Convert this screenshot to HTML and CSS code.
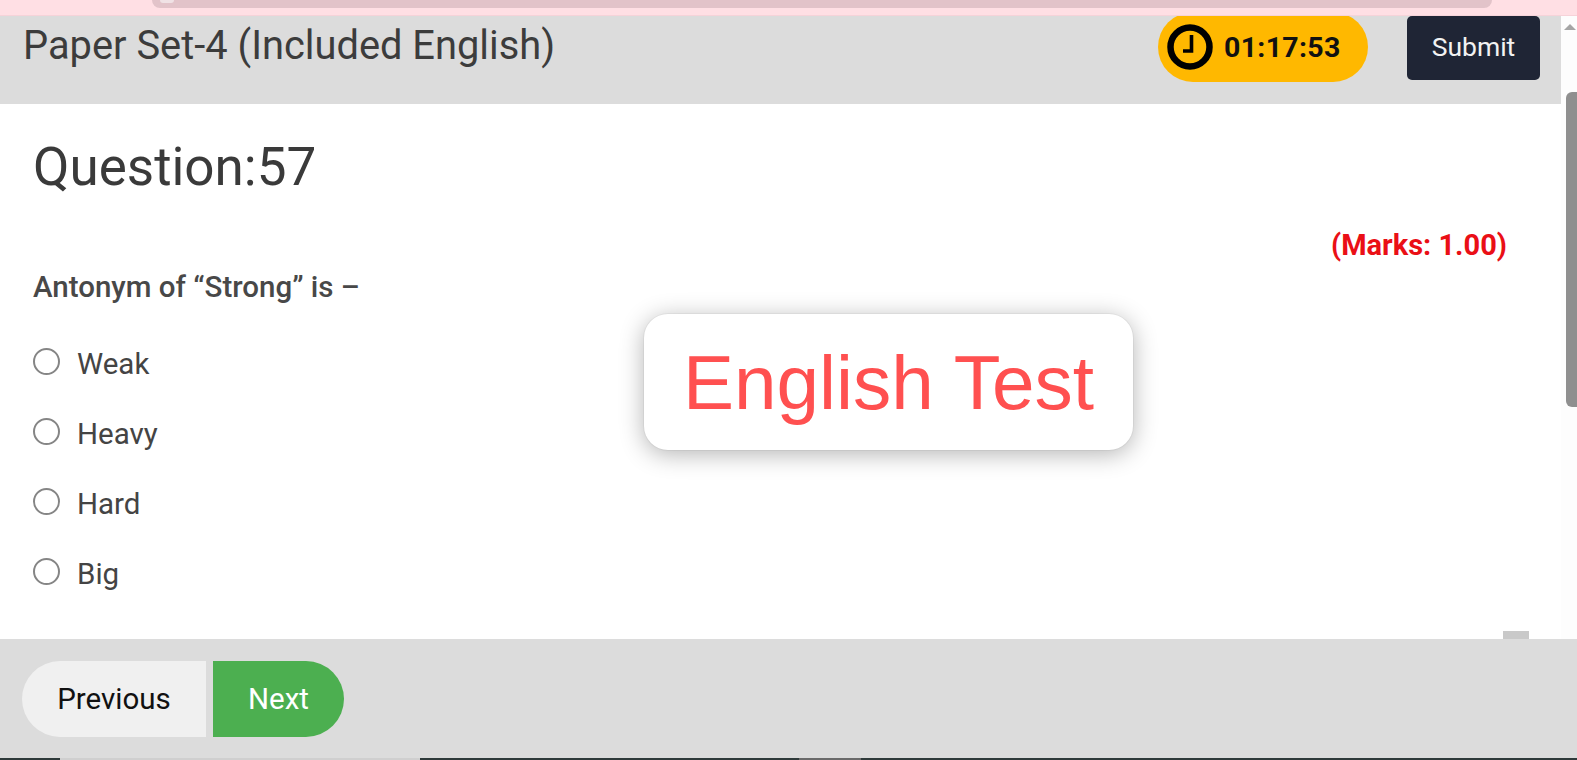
FILE: index.html
```html
<!DOCTYPE html>
<html lang="en">
<head>
<meta charset="utf-8">
<title>Paper Set-4 (Included English)</title>
<link rel="stylesheet" href="styles.css">
</head>
<body>
<div class="app">
  <div class="topstrip"><div class="urlbar"><span class="urldot"></span></div></div>
  <div class="middle">
    <div class="main">
      <header class="header">
        <h1 class="title">Paper Set-4 (Included English)</h1>
        <div class="timer">
          <svg class="clock" viewBox="0 0 46 46" aria-hidden="true">
            <circle cx="23" cy="23" r="19.5" fill="none" stroke="#000" stroke-width="6.5"/>
            <path d="M24.5 11V27H16" fill="none" stroke="#000" stroke-width="3.6"/>
          </svg>
          <span>01:17:53</span>
        </div>
        <button class="submit">Submit</button>
      </header>
      <section class="content">
        <h2 class="qnum">Question:57</h2>
        <div class="marks">(Marks: 1.00)</div>
        <p class="qtext">Antonym of “Strong” is –</p>
        <ul class="options">
          <li class="option"><span class="radio"></span>Weak</li>
          <li class="option"><span class="radio"></span>Heavy</li>
          <li class="option"><span class="radio"></span>Hard</li>
          <li class="option"><span class="radio"></span>Big</li>
        </ul>
        <div class="chip"></div>
      </section>
    </div>
    <div class="scrollbar">
      <div class="arrow"></div>
      <div class="thumb"></div>
    </div>
  </div>
  <footer class="footer">
    <button class="nav prev">Previous</button>
    <button class="nav next">Next</button>
  </footer>
  <div class="bottomstrip">
    <span class="seg dark s1"></span><span class="seg light s2"></span><span class="seg dark s3"></span><span class="seg grey s4"></span><span class="seg dark s5"></span>
  </div>
  <div class="toast">English Test</div>
</div>
</body>
</html>
```
FILE: styles.css
```css
* { box-sizing: border-box; }
html, body { margin: 0; padding: 0; height: 100%; overflow: hidden; }
body { font-family: Roboto, "Liberation Sans", sans-serif; background: #fff; color: #3a3a3a; }

.app { position: relative; width: 1577px; height: 760px; display: flex; flex-direction: column; }

.topstrip { position: relative; z-index: 1; height: 16px; flex: none; background: #ffdfe4; border-bottom: 1px solid #f6d3d9; padding: 0 85px 0 152px; }
.urlbar { height: 8px; background: #e2c3c9; border-radius: 0 0 12px 12px; padding-left: 8px; overflow: hidden; }
.urldot { display: block; width: 14px; height: 3px; background: #f0e2e5; border-radius: 0 0 7px 7px; }

.middle { flex: 1; display: flex; min-height: 0; }
.main { flex: 1; display: flex; flex-direction: column; min-width: 0; }

.header { height: 88px; flex: none; background: #dcdcdc; display: flex; align-items: flex-start; padding-left: 23px; padding-right: 21px; }
.title { flex: 1; margin: 5px 0 0; font-size: 39.85px; line-height: 50px; font-weight: 400; color: #3c3c3c; }
.timer { width: 210px; height: 70px; margin: -4px 39px 0 0; background: #ffb800; border-radius: 35px; display: flex; align-items: center; gap: 11px; padding-left: 9px; font-size: 28.5px; font-weight: 700; color: #111; letter-spacing: 0.3px; }
.clock { width: 46px; height: 46px; flex: none; }
.submit { width: 133px; height: 64px; border: 0; border-radius: 5px; background: #1f2535; color: #f2f2f2; font: 400 26.5px Roboto, sans-serif; padding: 0 0 4px; }

.content { position: relative; flex: 1; background: #fff; padding: 0 34px; }
.qnum { margin: 33px 0 0 -1px; font-size: 53px; line-height: 60px; font-weight: 400; color: #3a3a3a; }
.marks { margin: 30px 20px 0 0; text-align: right; font-size: 29px; line-height: 36px; font-weight: 700; color: #ea0f16; }
.qtext { margin: 6px 0 0 -1px; font-size: 29.5px; line-height: 36px; font-weight: 500; color: #484848; }
.options { list-style: none; margin: 41px 0 0; padding: 0; display: flex; flex-direction: column; gap: 34px; }
.option { display: flex; align-items: center; gap: 17px; height: 36px; font-size: 29.5px; color: #444; }
.radio { width: 27px; height: 27px; margin: -6px 0 0 -1px; flex: none; border: 2px solid #858585; border-radius: 50%; background: #fff; }
.chip { position: absolute; left: 1503px; bottom: 0; width: 26px; height: 8px; background: #c9c9c9; }

.scrollbar { width: 16px; flex: none; background: #fdfdfd; display: flex; flex-direction: column; align-items: flex-end; }
.arrow { width: 0; height: 0; margin: 8px 1px 0 0; border-left: 6px solid transparent; border-right: 6px solid transparent; border-bottom: 6px solid #a5a5a5; }
.thumb { width: 11px; height: 315px; margin-top: 62px; background: #8f8f8f; border-radius: 6px 0 0 6px; }

.footer { height: 119px; flex: none; background: #dcdcdc; display: flex; align-items: flex-start; padding: 22px 0 0 22px; gap: 7px; }
.nav { height: 76px; border: 0; padding: 0; font: 400 29.5px Roboto, sans-serif; }
.prev { width: 184px; background: #f0f0f0; color: #111; border-radius: 38px 0 0 38px; }
.next { width: 131px; background: #4caf50; color: #fff; border-radius: 0 38px 38px 0; }

.bottomstrip { height: 2px; flex: none; display: flex; }
.seg { display: block; height: 100%; }
.dark { background: #2f3a3a; }
.light { background: #cfcfcf; }
.grey { background: #6a6a6a; }
.s1 { width: 60px; }
.s2 { width: 360px; }
.s3 { width: 379px; }
.s4 { width: 62px; }
.s5 { flex: 1; }

.toast { position: absolute; left: 644px; top: 314px; width: 489px; height: 136px; padding-top: 2px; background: #fff; border-radius: 24px; box-shadow: 0 0 0 1px rgba(0,0,0,.04), 0 4px 24px rgba(0,0,0,.3); display: flex; align-items: center; justify-content: center; font-family: "Liberation Sans", Arial, sans-serif; font-size: 76.5px; color: #ff5050; }
```
